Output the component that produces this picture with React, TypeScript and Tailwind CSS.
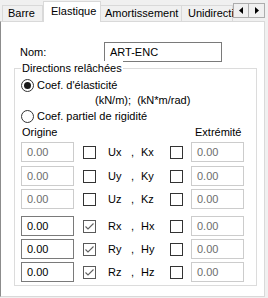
import React from 'react';

const rows = [
  { a: 'Ux', b: 'Kx', on: false, gap: 'mt-[3px]' },
  { a: 'Uy', b: 'Ky', on: false, gap: 'mt-[4px]' },
  { a: 'Uz', b: 'Kz', on: false, gap: 'mt-[3px]' },
  { a: 'Rx', b: 'Hx', on: true, gap: 'mt-[7px]' },
  { a: 'Ry', b: 'Hy', on: true, gap: 'mt-[3px]' },
  { a: 'Rz', b: 'Hz', on: true, gap: 'mt-[3px]' },
];

function Box({ checked }: { checked?: boolean }) {
  return (
    <div
      className={`w-[13px] h-[13px] border bg-white flex items-center justify-center shrink-0 ${
        checked ? 'border-[#5a5a5a]' : 'border-[#333333]'
      }`}
    >
      {checked && (
        <svg width="11" height="11" viewBox="0 0 11 11">
          <path d="M1.5 5.5 L4 8 L9.5 2.5" fill="none" stroke="#5f5f5f" strokeWidth="1.1" />
        </svg>
      )}
    </div>
  );
}

function Field({ enabled }: { enabled?: boolean }) {
  return (
    <div
      className={`w-[53px] h-[20px] border bg-white pl-[5px] flex items-center shrink-0 ${
        enabled ? 'border-[#7a7a7a] text-black' : 'border-[#cccccc] text-[#6d6d6d]'
      }`}
    >
      0.00
    </div>
  );
}

function Radio({ on }: { on?: boolean }) {
  return (
    <div className="w-[13px] h-[13px] rounded-full border border-[#333333] bg-white flex items-center justify-center shrink-0">
      {on && <div className="w-[7px] h-[7px] rounded-full bg-[#1a1a1a]" />}
    </div>
  );
}

export default function App() {
  return (
    <div
      className="w-[268px] h-[298px] bg-[#f0f0f0] text-[11px] text-black overflow-hidden"
      style={{ fontFamily: '"Liberation Sans", Arial, sans-serif' }}
    >
      {/* Tabs */}
      <div className="flex items-end h-[21px] pl-[2px]">
        <div className="w-[41px] h-[16px] border border-b-0 border-[#d9d9d9] bg-[#f0f0f0] pl-[5px] leading-[15px]">
          Barre
        </div>
        <div className="w-[58px] h-[21px] -mb-px border border-b-0 border-[#d9d9d9] bg-white pl-[7px] pt-[2px] leading-[15px] relative z-10">
          Elastique
        </div>
        <div className="w-[81px] h-[16px] border border-b-0 border-l-0 border-[#d9d9d9] bg-[#f0f0f0] pl-[4px] leading-[15px]">
          Amortissement
        </div>
        <div className="w-[51px] h-[16px] border border-b-0 border-l-0 border-[#d9d9d9] bg-[#f0f0f0] pl-[6px] leading-[15px] whitespace-nowrap">
          Unidirecti
        </div>
        <div className="flex self-start mt-[3px]">
          <div className="w-[16px] h-[15px] border border-[#adadad] bg-[#f0f0f0] flex items-center justify-center">
            <svg width="4" height="7" viewBox="0 0 4 7"><path d="M4 0 L0 3.5 L4 7 Z" fill="#000" /></svg>
          </div>
          <div className="w-[16px] h-[15px] border border-l-0 border-[#adadad] bg-[#f0f0f0] flex items-center justify-center">
            <svg width="4" height="7" viewBox="0 0 4 7"><path d="M0 0 L4 3.5 L0 7 Z" fill="#000" /></svg>
          </div>
        </div>
      </div>

      {/* Panel */}
      <div className="w-[265px] h-[276px] bg-white border border-[#d9d9d9] border-l-[#8c8c8c] flex flex-col pt-[20px]">
        <div className="flex items-center h-[20px]">
          <div className="w-[103px] pl-[19px]">Nom:</div>
          <div className="w-[118px] h-[20px] border border-[#7a7a7a] pl-[5px] flex items-center">ART-ENC</div>
        </div>

        <div className="mt-[6px] ml-[13px] w-[243px] h-[218px] border border-[#dcdcdc] flex flex-col">
          <span className="-mt-[8px] ml-[6px] px-[1px] self-start bg-white leading-[14px]">Directions relâchées</span>

          <div className="flex items-center h-[14px] mt-[3px] pl-[6px] gap-[3px]">
            <Radio on />
            <span>Coef. d'élasticité</span>
          </div>
          <div className="h-[14px] mt-[1px] pl-[80px] leading-[14px] whitespace-pre">(kN/m);  (kN*m/rad)</div>
          <div className="flex items-center h-[14px] mt-[2px] pl-[6px] gap-[3px]">
            <Radio />
            <span>Coef. partiel de rigidité</span>
          </div>
          <div className="flex h-[14px] mt-[2px] leading-[14px]">
            <span className="pl-[7px] w-[180px]">Origine</span>
            <span>Extrémité</span>
          </div>

          {rows.map((r) => (
            <div key={r.a} className={`flex items-center h-[20px] pl-[6px] ${r.gap}`}>
              <Field enabled={r.on} />
              <div className="ml-[9px]">
                <Box checked={r.on} />
              </div>
              <span className="ml-[12px] w-[23px]">{r.a}</span>
              <span className="w-[10px]">,</span>
              <span className="w-[29px]">{r.b}</span>
              <Box />
              <div className="ml-[8px]">
                <Field />
              </div>
            </div>
          ))}
        </div>
      </div>
    </div>
  );
}
